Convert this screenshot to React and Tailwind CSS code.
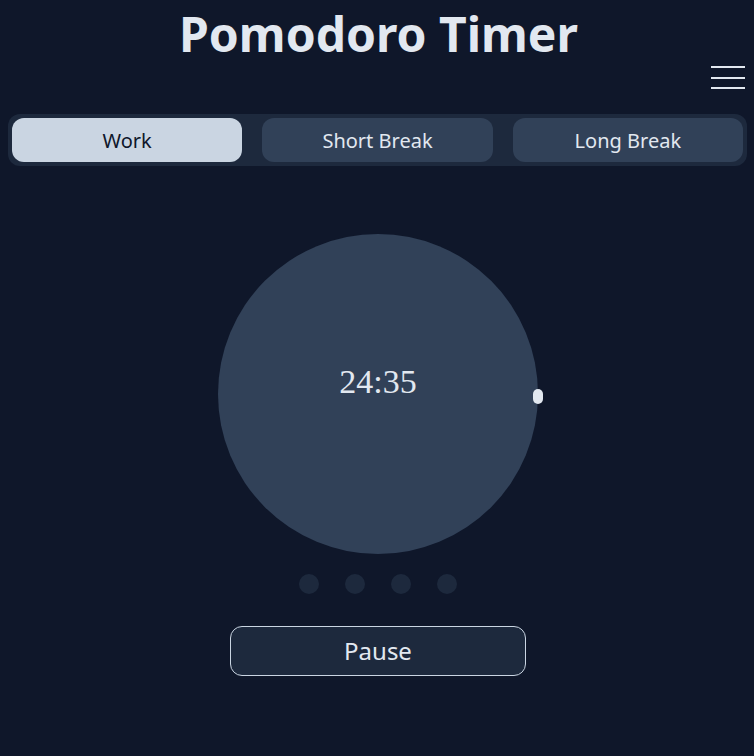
import { useState } from 'react';

const modes = ['Work', 'Short Break', 'Long Break'];

function App() {
  const [mode, setMode] = useState('Work');

  return (
    <div className="min-h-[756px] bg-[#0f172a] text-slate-200 font-['Noto_Sans',sans-serif] pl-2 pr-[7px]">
      <h1 className="pt-[10px] pl-[2px] text-center text-[48px] leading-none font-bold text-slate-200">Pomodoro Timer</h1>

      {/* Menu button */}
      <div className="flex justify-end pr-[2px] mt-[6px]">
        <button type="button" className="flex flex-col gap-[8.5px] py-[2px]">
          <span className="block w-[34px] h-[2px] bg-slate-200"></span>
          <span className="block w-[34px] h-[2px] bg-slate-200"></span>
          <span className="block w-[34px] h-[2px] bg-slate-200"></span>
        </button>
      </div>

      {/* Tabs */}
      <div className="mt-[23px] flex gap-5 rounded-xl bg-slate-800 p-1">
        {modes.map((m) => (
          <button
            key={m}
            type="button"
            onClick={() => setMode(m)}
            className={`flex-1 h-11 pt-[2px] rounded-xl text-[20px] ${
              mode === m ? 'bg-slate-300 text-slate-900' : 'bg-slate-700 text-slate-200'
            }`}
          >
            {m}
          </button>
        ))}
      </div>

      {/* Timer */}
      <div className="mt-[68px] pl-[1px] flex justify-center">
        <div className="relative w-[320px] h-[320px] rounded-full bg-slate-700 flex items-center justify-center">
          <span className="font-['Liberation_Serif',serif] text-[34px] text-slate-200 -mt-[26px]">24:35</span>
          <span className="absolute left-[315px] top-[155px] w-[10px] h-[15px] rounded-full bg-slate-200"></span>
        </div>
      </div>

      {/* Session dots */}
      <div className="mt-5 pl-[1px] flex justify-center gap-[26px]">
        <span className="w-5 h-5 rounded-full bg-slate-800"></span>
        <span className="w-5 h-5 rounded-full bg-slate-800"></span>
        <span className="w-5 h-5 rounded-full bg-slate-800"></span>
        <span className="w-5 h-5 rounded-full bg-slate-800"></span>
      </div>

      <div className="mt-8 pl-[1px] flex justify-center">
        <button type="button" className="w-[296px] h-[50px] rounded-xl border border-slate-300 bg-slate-800 text-2xl text-slate-200">
          Pause
        </button>
      </div>
    </div>
  );
}

export default App;
